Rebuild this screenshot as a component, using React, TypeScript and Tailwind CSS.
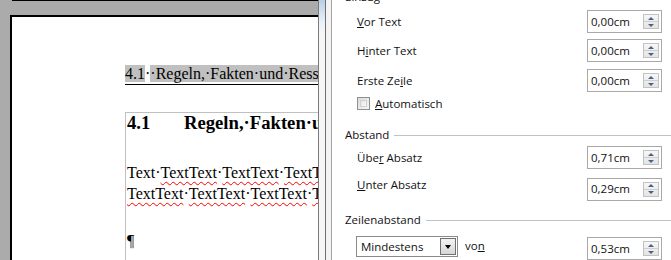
import React from "react";

const ui = { fontFamily: '"Open Sans", "Noto Sans", sans-serif' };
const serif = { fontFamily: '"Liberation Serif", "Times New Roman", serif' };

function Spinner() {
  return (
    <div className="mr-[2px] flex h-[15px] w-[16px] flex-col border border-[#c2c2c2] bg-[linear-gradient(to_bottom,#f7f7f7,#e4e4e4)]">
      <div className="flex flex-1 items-center justify-center border-b border-[#cfcfcf]">
        <div className="h-0 w-0 border-x-[3px] border-b-[3px] border-x-transparent border-b-[#4a6283]" />
      </div>
      <div className="flex flex-1 items-center justify-center">
        <div className="h-0 w-0 border-x-[3px] border-t-[3px] border-x-transparent border-t-[#4a6283]" />
      </div>
    </div>
  );
}

function NumBox({ value }: { value: string }) {
  return (
    <div className="flex h-[23px] w-[75px] shrink-0 items-center justify-between border border-[#a9a9a9] bg-white pl-[3px]">
      <span className="text-[11.5px] leading-[16px] text-[#111]">{value}</span>
      <Spinner />
    </div>
  );
}

function Header({ title, className = "" }: { title: string; className?: string }) {
  return (
    <div className={"flex h-[16px] items-center pl-[13px] " + className}>
      <span className="text-[11.5px] leading-[16px] text-[#111]">{title}</span>
      <div className="ml-[5px] h-px flex-1 bg-[#c2c2c2]" />
    </div>
  );
}

function Row({ children, value, className = "" }: { children: React.ReactNode; value: string; className?: string }) {
  return (
    <div className={"flex items-center pl-[25px] pr-[9px] " + className}>
      <div className="flex-1 text-[11.5px] leading-[16px] text-[#111]">{children}</div>
      <NumBox value={value} />
    </div>
  );
}

function W({ children }: { children: React.ReactNode }) {
  return (
    <span className="underline decoration-[#ff0000] decoration-wavy decoration-1 underline-offset-[3px]">{children}</span>
  );
}

export default function App() {
  return (
    <div className="flex h-[260px] w-[671px] overflow-hidden bg-white">
      {/* Document area */}
      <div className="flex h-[260px] w-[318px] shrink-0 flex-col overflow-hidden bg-[#ababab]">
        <div className="ml-[12px] h-px w-[400px] shrink-0 bg-black" />
        <div className="h-[14px] shrink-0" />
        <div className="ml-[10px] w-[400px] flex-1 shrink-0 border-l-2 border-t-2 border-black bg-white" style={serif}>
          <div className="pl-[113px] pt-[47px] text-black">
            <div className="whitespace-nowrap border-b border-black pb-[1px] text-[16px] leading-[19px]">
              <span className="bg-[#c0c0c0]">
                4.1<span className="bg-white">·</span>·Regeln,·Fakten·und·Ressourcen
              </span>
            </div>
            <div className="mt-[27px] h-[200px] border-l border-t border-[#c0c0c0] pl-px">
              <div className="whitespace-nowrap text-[18.67px] font-bold leading-[20px]">
                <span className="inline-block w-[57px]">4.1</span>Regeln,·Fakten·und·Ressourcen
              </div>
              <div className="mt-[29px] whitespace-nowrap text-[16px] leading-[21.2px]">
                <div>
                  Text·<W>TextText</W>·<W>TextText</W>·<W>TextText</W>·<W>TextText</W>
                </div>
                <div>
                  <W>TextText</W>·<W>TextText</W>·<W>TextText</W>·<W>TextText</W>
                </div>
              </div>
              <div className="mt-[26px] text-[16px] leading-[21.2px]">¶</div>
            </div>
          </div>
        </div>
      </div>

      {/* Separator / scroll edge */}
      <div className="w-px shrink-0 bg-[#7b7b7b]" />
      <div className="w-[6px] shrink-0 bg-[linear-gradient(to_bottom,#b8cfe8_0px,#e9f0f8_22px,#f6f6f6_34px)]" />
      <div className="w-px shrink-0 bg-[#6f6f6f]" />
      <div className="w-[5px] shrink-0 bg-[#f3f3f3]" />
      <div className="w-px shrink-0 bg-[#a3a3a3]" />

      {/* Panel */}
      <div className="flex h-[260px] flex-1 flex-col overflow-hidden bg-white" style={ui}>
        <Header title="Einzug" className="-mt-[11px]" />
        <Row value="0,00cm" className="mt-[5px]">
          <span className="underline">V</span>or Text
        </Row>
        <Row value="0,00cm" className="mt-[6px]">
          H<span className="underline">i</span>nter Text
        </Row>
        <Row value="0,00cm" className="mt-[7px]">
          Erste Ze<span className="underline">i</span>le
        </Row>
        <div className="mt-[5px] flex h-[13px] items-center pl-[25px]">
          <div className="h-[13px] w-[13px] border border-[#8e8f8f] bg-[linear-gradient(135deg,#dcdcdc,#f6f6f6)] p-[2px]">
            <div className="h-full w-full border border-[#d0d0d0] bg-[linear-gradient(135deg,#e4e4e4,#f9f9f9)]" />
          </div>
          <span className="ml-[5px] text-[11.5px] leading-[16px] text-[#111]">
            <span className="underline">A</span>utomatisch
          </span>
        </div>
        <Header title="Abstand" className="mt-[17px]" />
        <Row value="0,71cm" className="mt-[3px]">
          Übe<span className="underline">r</span> Absatz
        </Row>
        <Row value="0,29cm" className="mt-[8px]">
          <div className="mb-[8px]">
            <span className="underline">U</span>nter Absatz
          </div>
        </Row>
        <Header title="Zeilenabstand" className="mt-[11px]" />
        <div className="mt-[8px] flex items-start pl-[24px] pr-[9px]">
          <div className="flex h-[21px] w-[102px] items-center justify-between border border-[#8a8a8a] bg-white pl-[4px] pr-px">
            <span className="text-[11.5px] leading-[16px] text-[#111]">Mindestens</span>
            <div className="flex h-[17px] w-[16px] items-center justify-center border border-[#6f6f6f] bg-[linear-gradient(to_bottom,#f2f2f2,#d6d6d6)]">
              <div className="h-0 w-0 border-x-[3.5px] border-t-[4px] border-x-transparent border-t-black" />
            </div>
          </div>
          <span className="ml-[7px] mt-[2px] flex-1 text-[11.5px] leading-[16px] text-[#111]">
            vo<span className="underline">n</span>
          </span>
          <div className="mt-[1px]">
            <NumBox value="0,53cm" />
          </div>
        </div>
      </div>
    </div>
  );
}
